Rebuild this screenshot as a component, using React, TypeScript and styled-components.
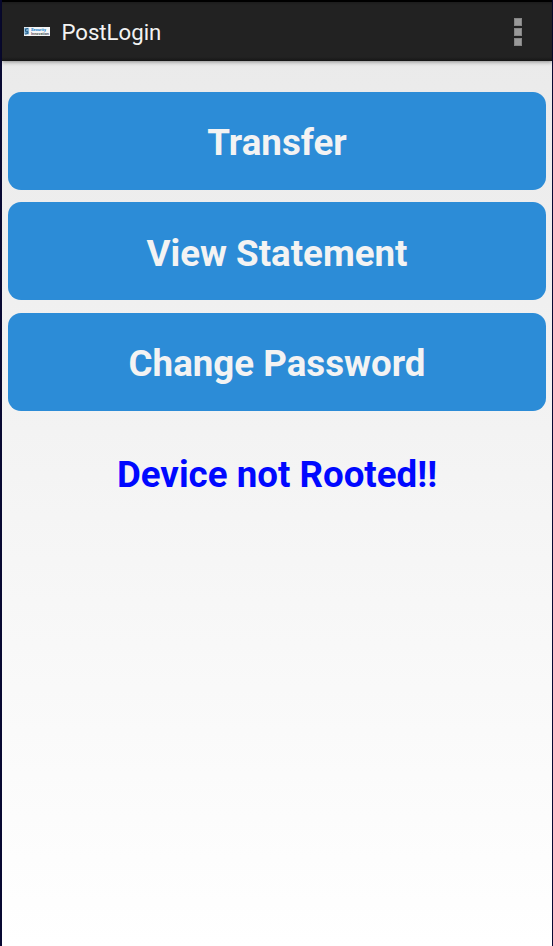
import React from "react";
import styled, { createGlobalStyle } from "styled-components";

const GlobalStyle = createGlobalStyle`
  * { box-sizing: border-box; }
  body { margin: 0; font-family: Roboto, "Noto Sans", sans-serif; }
`;

const Screen = styled.div`
  display: flex;
  flex-direction: column;
  width: 100%;
  height: 946px;
  border: solid #080932;
  border-width: 0 1px 0 2px;
  background: linear-gradient(#e9e9e9, #ffffff);
`;

const ActionBar = styled.header`
  display: flex;
  align-items: center;
  flex: none;
  height: 61px;
  padding: 2px 30px 0 22px;
  border-top: 2px solid #000;
  background: linear-gradient(#1c1c1c 0, #222 3px, #222 55px, #191919 58px, #141414 59px);
  box-shadow: 0 1px 4px rgba(0, 0, 0, 0.42);
`;

const Logo = styled.svg`
  display: block;
  flex: none;
  margin-top: -2px;
`;

const Title = styled.h1`
  flex: 1;
  margin: -2px 0 0 11.4px;
  color: #f3f3f3;
  font-size: 22.2px;
  font-weight: 400;
  line-height: 28px;
`;

const MenuButton = styled.button`
  display: flex;
  flex-direction: column;
  gap: 2px;
  margin-top: -2px;
  padding: 0;
  border: 0;
  background: none;
`;

const MenuDot = styled.span`
  width: 8px;
  height: 8px;
  background: #999;
  border: 1px solid #858585;
`;

const Content = styled.main`
  display: flex;
  flex-direction: column;
  gap: 12.3px;
  padding: 30.6px 6px 0;
`;

const ActionButton = styled.button`
  height: 98.3px;
  padding: 5px 0 0;
  border: 0;
  border-radius: 13px;
  background: #2c8cd7;
  color: #f3f3f3;
  font: 700 36.7px/44px Roboto, "Noto Sans", sans-serif;
`;

const Status = styled.p`
  margin: 30px 0 0;
  color: #0008ff;
  font-size: 36.7px;
  font-weight: 700;
  line-height: 44px;
  text-align: center;
`;

const actions = ["Transfer", "View Statement", "Change Password"];

export default function App() {
  return (
    <>
      <GlobalStyle />
      <Screen>
        <ActionBar>
          <Logo width="26" height="9" viewBox="0 0 26 9" aria-hidden="true">
            <rect width="26" height="9" fill="#f5f6f7" />
            <rect x="0.3" y="0.8" width="4.8" height="6.6" fill="#83b3d6" />
            <path d="M4 1.5Q1 1.5 1.5 3.5T3.5 4.5Q5 7 1 7" fill="none" stroke="#29638d" strokeWidth="1.1" />
            <text x="7" y="4.2" fontSize="4" fontWeight="700" fill="#1680cb" textLength="15" lengthAdjust="spacingAndGlyphs">Security</text>
            <text x="7" y="7.5" fontSize="3.8" fontWeight="700" fill="#55595e" textLength="18" lengthAdjust="spacingAndGlyphs">Innovation</text>
          </Logo>
          <Title>PostLogin</Title>
          <MenuButton aria-label="More options">
            <MenuDot />
            <MenuDot />
            <MenuDot />
          </MenuButton>
        </ActionBar>
        <Content>
          {actions.map((label) => (
            <ActionButton key={label}>{label}</ActionButton>
          ))}
          <Status>Device not Rooted!!</Status>
        </Content>
      </Screen>
    </>
  );
}
